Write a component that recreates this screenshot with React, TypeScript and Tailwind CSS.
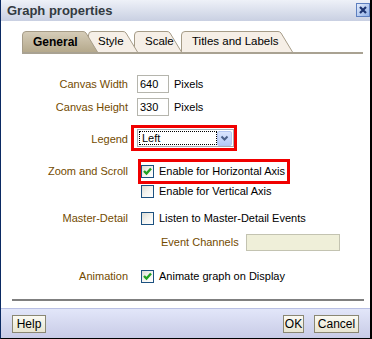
import React from "react";

const LABEL = "text-[#734b00]";

function Checkbox({ checked }: { checked?: boolean }) {
  return (
    <div className="w-[13px] h-[13px] shrink-0 border border-[#1c5180] bg-gradient-to-br from-[#dcdcd5] via-[#f4f4f0] to-white flex items-center justify-center">
      {checked && (
        <svg width="11" height="11" viewBox="0 0 11 11">
          <path d="M2 5 L4.5 7.5 L9 2.5" fill="none" stroke="#21a121" strokeWidth="2.4" />
        </svg>
      )}
    </div>
  );
}

function Tab({
  label,
  width,
  active,
  className,
  pl,
}: {
  label: string;
  width: number;
  active?: boolean;
  className: string;
  pl: string;
}) {
  const w = width;
  const d = `M0.5 21 V4 Q0.5 0.5 4 0.5 H${w - 15} Q${w - 13} 0.5 ${w - 12} 2 L${w - 0.5} 21`;
  return (
    <div className={`relative h-[21px] shrink-0 ${className}`} style={{ width: w }}>
      <svg className="absolute inset-0" width={w} height={21} viewBox={`0 0 ${w} 21`}>
        <defs>
          <linearGradient id="act" x1="0" y1="0" x2="0" y2="1">
            <stop offset="0" stopColor="#d6cdb9" />
            <stop offset="1" stopColor="#b5a98c" />
          </linearGradient>
        </defs>
        <path d={d} fill={active ? "url(#act)" : "#f6efe7"} stroke="#a69c88" strokeWidth="1" />
      </svg>
      <div
        className={`relative h-full flex items-center ${pl} ${
          active ? "font-bold text-[12px] text-black" : "text-[11.5px] text-black"
        }`}
      >
        {label}
      </div>
    </div>
  );
}

export default function App() {
  return (
    <div className="w-[372px] h-[339px] flex flex-col bg-white border-l border-l-[#0b2a63] border-r-2 border-r-black border-b border-b-black font-['Liberation_Sans',Arial,sans-serif] text-[11px] text-black overflow-hidden">
      {/* Title bar */}
      <div className="h-[21px] shrink-0 flex items-center justify-between pl-[6px] bg-gradient-to-b from-[#eef1f8] to-[#c9d0e2]">
        <span className="font-bold text-[13px] text-[#333a40] leading-none">Graph properties</span>
        <svg width="14" height="14" viewBox="0 0 14 14" className="mt-[-1px]">
          <defs>
            <linearGradient id="cb" x1="0" y1="0" x2="1" y2="1">
              <stop offset="0" stopColor="#e6eefc" />
              <stop offset="1" stopColor="#8eaee6" />
            </linearGradient>
          </defs>
          <rect x="0.5" y="0.5" width="13" height="13" fill="url(#cb)" stroke="#5d7fbf" />
          <path d="M4 4 L10 10 M10 4 L4 10" stroke="#1d3470" strokeWidth="2.2" />
        </svg>
      </div>

      {/* Tabs */}
      <div className="mt-[10px] ml-[21px] mr-[7px] flex items-end border-b-2 border-b-[#a9a292]">
        <Tab label="General" width={76} active className="z-30" pl="pl-[11px]" />
        <Tab label="Style" width={50} className="z-20 ml-[-10px]" pl="pl-[10px]" />
        <Tab label="Scale" width={48} className="z-10 ml-[-4px]" pl="pl-[11px]" />
        <Tab label="Titles and Labels" width={112} className="z-0 ml-[-1px]" pl="pl-[11px]" />
      </div>

      {/* Form */}
      <div className="flex flex-col">
        <div className="mt-[21px] h-[18px] flex items-center">
          <div className={`w-[127px] text-right ${LABEL}`}>Canvas Width</div>
          <div className="ml-[9px] w-[32px] h-[18px] border border-[#b5b5ad] flex items-center pl-[2px]">640</div>
          <span className="ml-[5px]">Pixels</span>
        </div>
        <div className="mt-[5px] h-[18px] flex items-center">
          <div className={`w-[127px] text-right ${LABEL}`}>Canvas Height</div>
          <div className="ml-[9px] w-[32px] h-[18px] border border-[#b5b5ad] flex items-center pl-[2px]">330</div>
          <span className="ml-[5px]">Pixels</span>
        </div>
        <div className="mt-[9px] h-[26px] flex items-center">
          <div className={`w-[127px] text-right pt-[3px] ${LABEL}`}>Legend</div>
          <div className="ml-[3px] h-[26px] border-[3px] border-[#f00000] flex items-center pl-[3px]">
            <div className="w-[97px] h-[18px] border border-[#a5acb5] bg-white flex items-center pl-[1px] pr-[1px]">
              <div className="w-[79px] h-[14px] border border-dotted border-black flex items-center pl-[2px]">Left</div>
              <div className="ml-auto w-[15px] h-[15px] rounded-[2px] border border-[#b4c6f2] bg-gradient-to-b from-[#d9e4fd] to-[#b5caf8] flex items-center justify-center">
                <svg width="9" height="7" viewBox="0 0 9 7">
                  <path d="M1.5 1.5 L4.5 4.5 L7.5 1.5" fill="none" stroke="#4a5f88" strokeWidth="2" />
                </svg>
              </div>
            </div>
          </div>
        </div>
        <div className="mt-[8px] h-[25px] flex items-center">
          <div className={`w-[127px] text-right ${LABEL}`}>Zoom and Scroll</div>
          <div className="ml-[10px] h-[25px] border-[3px] border-[#f00000] flex items-center pr-[2px]">
            <Checkbox checked />
            <span className="ml-[5px]">Enable for Horizontal Axis</span>
          </div>
        </div>
        <div className="mt-[1px] h-[13px] flex items-center">
          <div className="w-[127px]" />
          <div className="ml-[13px] flex items-center">
            <Checkbox />
            <span className="ml-[5px]">Enable for Vertical Axis</span>
          </div>
        </div>
        <div className="mt-[14px] h-[13px] flex items-center">
          <div className={`w-[127px] text-right ${LABEL}`}>Master-Detail</div>
          <div className="ml-[13px] flex items-center">
            <Checkbox />
            <span className="ml-[5px]">Listen to Master-Detail Events</span>
          </div>
        </div>
        <div className="mt-[9px] h-[17px] flex items-center">
          <div className="w-[127px]" />
          <div className="ml-[33px] flex items-center">
            <span className={LABEL}>Event Channels</span>
            <div className="ml-[7px] w-[94px] h-[17px] border border-[#c3c3b1] bg-[#efefd9]" />
          </div>
        </div>
        <div className="mt-[19px] h-[13px] flex items-center">
          <div className={`w-[127px] text-right ${LABEL}`}>Animation</div>
          <div className="ml-[13px] flex items-center">
            <Checkbox checked />
            <span className="ml-[5px]">Animate graph on Display</span>
          </div>
        </div>
        <div className="mt-[16px] ml-[11px] w-[352px] h-[2px] bg-[#7f7f7f]" />
      </div>

      {/* Footer */}
      <div className="mt-auto h-[30px] shrink-0 border-t border-t-[#b9c0e4] bg-gradient-to-b from-[#e2e6f9] to-[#c8cbe6] flex items-center px-[11px] pt-[1px]">
        <button className="w-[34px] h-[18px] border border-[#8a8773] bg-gradient-to-b from-[#fbfaf3] to-[#e8e5d1] text-[12px] leading-none flex items-center justify-center">
          Help
        </button>
        <button className="ml-auto w-[21px] h-[18px] border border-[#8a8773] bg-gradient-to-b from-[#fbfaf3] to-[#e8e5d1] text-[12px] leading-none flex items-center justify-center">
          OK
        </button>
        <button className="ml-[10px] w-[45px] h-[18px] border border-[#8a8773] bg-gradient-to-b from-[#fbfaf3] to-[#e8e5d1] text-[12px] leading-none flex items-center justify-center">
          Cancel
        </button>
      </div>
    </div>
  );
}
